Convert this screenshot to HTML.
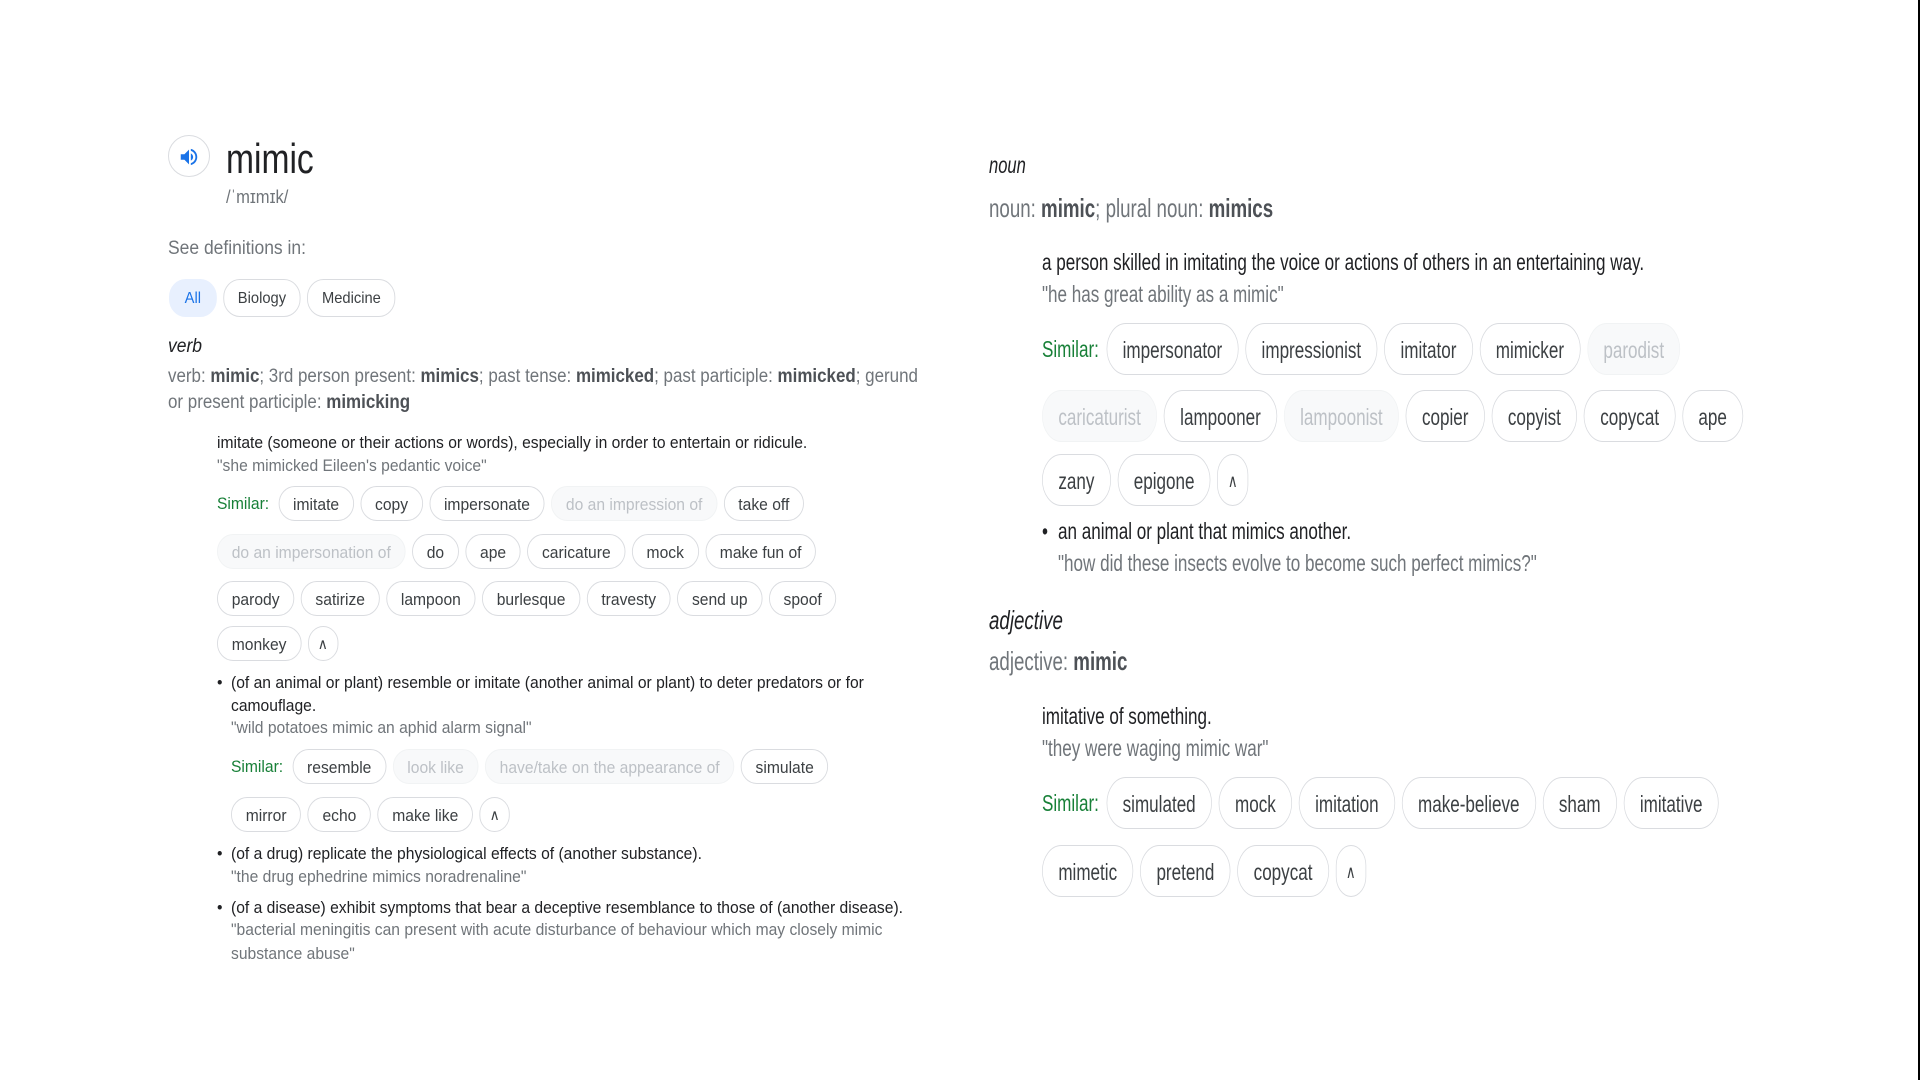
<!DOCTYPE html>
<html><head><meta charset="utf-8"><style>
html,body{margin:0;padding:0;background:#fff;}
body{width:1920px;height:1080px;position:relative;overflow:hidden;font-family:"Liberation Sans",Arial,sans-serif;}
.r{position:absolute;white-space:nowrap;transform-origin:0 50%;}
.L{transform:scaleX(0.92);font-size:17px;line-height:23px;color:#202124;}
.R{transform:scaleX(0.742);font-size:23px;line-height:32px;color:#202124;}
.g{color:#70757a;}
.q{color:#70757a;}
b{color:#4d5156;}
.chips{display:flex;align-items:center;}
.L .c{height:35px;line-height:35px;border:1px solid #dadce0;border-radius:18px;padding:0 15px;margin-right:7px;box-sizing:border-box;color:#3c4043;}
.R .c{height:52px;line-height:52px;border:1px solid #dadce0;border-radius:26px;padding:0 21px;margin-right:9px;box-sizing:border-box;color:#3c4043;}
.c.d{border-color:#f1f3f4;background:#f8f9fa;color:#bdc1c6;}
.sim{color:#188038;margin-right:10px;}
.up{padding:0 10px!important;font-size:15px;}
.R .up{padding:0 13px!important;font-size:18px;}
</style></head><body>
<div style="position:absolute;left:1918px;top:0;width:2px;height:1080px;background:#000"></div>

<div style="position:absolute;left:168px;top:135px;width:42px;height:42px;border:1px solid #dadce0;border-radius:50%;box-sizing:border-box;"></div>
<svg style="position:absolute;left:178px;top:146px" width="22" height="22" viewBox="0 0 24 24"><path d="M3 9v6h4l5 5V4L7 9H3z" fill="#1a73e8"/><path d="M16.5 12c0-1.8-1-3.3-2.5-4v8c1.5-.7 2.5-2.2 2.5-4zM14 3.2v2.1c2.9.9 5 3.5 5 6.7s-2.1 5.8-5 6.7v2.1c4-.9 7-4.5 7-8.8s-3-7.9-7-8.8z" fill="#1a73e8"/></svg>
<div class="r" style="left:226px;top:134px;font-size:42px;line-height:50px;color:#202124;transform:scaleX(0.8)">mimic</div>
<div class="r L g" style="left:226px;top:186px;font-size:18px;">/ˈmɪmɪk/</div>
<div class="r L g" style="left:168px;top:237px;font-size:19px;">See definitions in:</div>
<div class="r L" style="left:169px;top:279px;">
 <div class="chips" style="font-size:16px">
  <div class="c" style="height:38px;line-height:38px;border-color:#e8f0fe;background:#e8f0fe;color:#1a73e8;padding:0 16px;">All</div>
  <div class="c" style="height:38px;line-height:38px;">Biology</div>
  <div class="c" style="height:38px;line-height:38px;">Medicine</div>
 </div></div>
<div class="r L" style="left:168px;top:335px;font-style:italic;font-size:19px;">verb</div>
<div class="r L g" style="left:168px;top:364px;font-size:19px;line-height:26px;transform:scaleX(0.892)">verb: <b>mimic</b>; 3rd person present: <b>mimics</b>; past tense: <b>mimicked</b>; past participle: <b>mimicked</b>; gerund</div>
<div class="r L g" style="left:168px;top:390px;font-size:19px;line-height:26px;transform:scaleX(0.892)">or present participle: <b>mimicking</b></div>

<div class="r L" style="left:217px;top:431px;">imitate (someone or their actions or words), especially in order to entertain or ridicule.</div>
<div class="r L q" style="left:217px;top:454px;">"she mimicked Eileen's pedantic voice"</div>
<div class="r L" style="left:217px;top:486px;"><div class="chips"><span class="sim">Similar:</span><div class="c">imitate</div><div class="c">copy</div><div class="c">impersonate</div><div class="c d">do an impression of</div><div class="c">take off</div></div></div>
<div class="r L" style="left:217px;top:534px;"><div class="chips"><div class="c d">do an impersonation of</div><div class="c">do</div><div class="c">ape</div><div class="c">caricature</div><div class="c">mock</div><div class="c">make fun of</div></div></div>
<div class="r L" style="left:217px;top:581px;"><div class="chips"><div class="c">parody</div><div class="c">satirize</div><div class="c">lampoon</div><div class="c">burlesque</div><div class="c">travesty</div><div class="c">send up</div><div class="c">spoof</div></div></div>
<div class="r L" style="left:217px;top:626px;"><div class="chips"><div class="c">monkey</div><div class="c up">∧</div></div></div>

<div class="r L" style="left:217px;top:671px;">•</div>
<div class="r L" style="left:231px;top:671px;">(of an animal or plant) resemble or imitate (another animal or plant) to deter predators or for</div>
<div class="r L" style="left:231px;top:694px;">camouflage.</div>
<div class="r L q" style="left:231px;top:716px;">"wild potatoes mimic an aphid alarm signal"</div>
<div class="r L" style="left:231px;top:749px;"><div class="chips"><span class="sim">Similar:</span><div class="c">resemble</div><div class="c d">look like</div><div class="c d">have/take on the appearance of</div><div class="c">simulate</div></div></div>
<div class="r L" style="left:231px;top:797px;"><div class="chips"><div class="c">mirror</div><div class="c">echo</div><div class="c">make like</div><div class="c up">∧</div></div></div>

<div class="r L" style="left:217px;top:842px;">•</div>
<div class="r L" style="left:231px;top:842px;">(of a drug) replicate the physiological effects of (another substance).</div>
<div class="r L q" style="left:231px;top:865px;">"the drug ephedrine mimics noradrenaline"</div>
<div class="r L" style="left:217px;top:896px;">•</div>
<div class="r L" style="left:231px;top:896px;">(of a disease) exhibit symptoms that bear a deceptive resemblance to those of (another disease).</div>
<div class="r L q" style="left:231px;top:918px;">"bacterial meningitis can present with acute disturbance of behaviour which may closely mimic</div>
<div class="r L q" style="left:231px;top:942px;">substance abuse"</div>

<div class="r R" style="left:989px;top:149px;font-style:italic;transform:scaleX(0.72)">noun</div>
<div class="r R g" style="left:989px;top:192px;font-size:26px;transform:scaleX(0.72)">noun: <b>mimic</b>; plural noun: <b>mimics</b></div>
<div class="r R" style="left:1042px;top:246px;">a person skilled in imitating the voice or actions of others in an entertaining way.</div>
<div class="r R q" style="left:1042px;top:278px;">"he has great ability as a mimic"</div>
<div class="r R" style="left:1042px;top:323px;"><div class="chips"><span class="sim">Similar:</span><div class="c">impersonator</div><div class="c">impressionist</div><div class="c">imitator</div><div class="c">mimicker</div><div class="c d">parodist</div></div></div>
<div class="r R" style="left:1042px;top:390px;"><div class="chips"><div class="c d">caricaturist</div><div class="c">lampooner</div><div class="c d">lampoonist</div><div class="c">copier</div><div class="c">copyist</div><div class="c">copycat</div><div class="c">ape</div></div></div>
<div class="r R" style="left:1042px;top:454px;"><div class="chips"><div class="c">zany</div><div class="c">epigone</div><div class="c up">∧</div></div></div>
<div class="r R" style="left:1042px;top:515px;">•</div>
<div class="r R" style="left:1058px;top:515px;">an animal or plant that mimics another.</div>
<div class="r R q" style="left:1058px;top:547px;">"how did these insects evolve to become such perfect mimics?"</div>

<div class="r R" style="left:989px;top:604px;font-style:italic;font-size:26px;transform:scaleX(0.72)">adjective</div>
<div class="r R g" style="left:989px;top:645px;font-size:26px;transform:scaleX(0.72)">adjective: <b>mimic</b></div>
<div class="r R" style="left:1042px;top:700px;">imitative of something.</div>
<div class="r R q" style="left:1042px;top:732px;">"they were waging mimic war"</div>
<div class="r R" style="left:1042px;top:777px;"><div class="chips"><span class="sim">Similar:</span><div class="c">simulated</div><div class="c">mock</div><div class="c">imitation</div><div class="c">make-believe</div><div class="c">sham</div><div class="c">imitative</div></div></div>
<div class="r R" style="left:1042px;top:845px;"><div class="chips"><div class="c">mimetic</div><div class="c">pretend</div><div class="c">copycat</div><div class="c up">∧</div></div></div>
</body></html>
